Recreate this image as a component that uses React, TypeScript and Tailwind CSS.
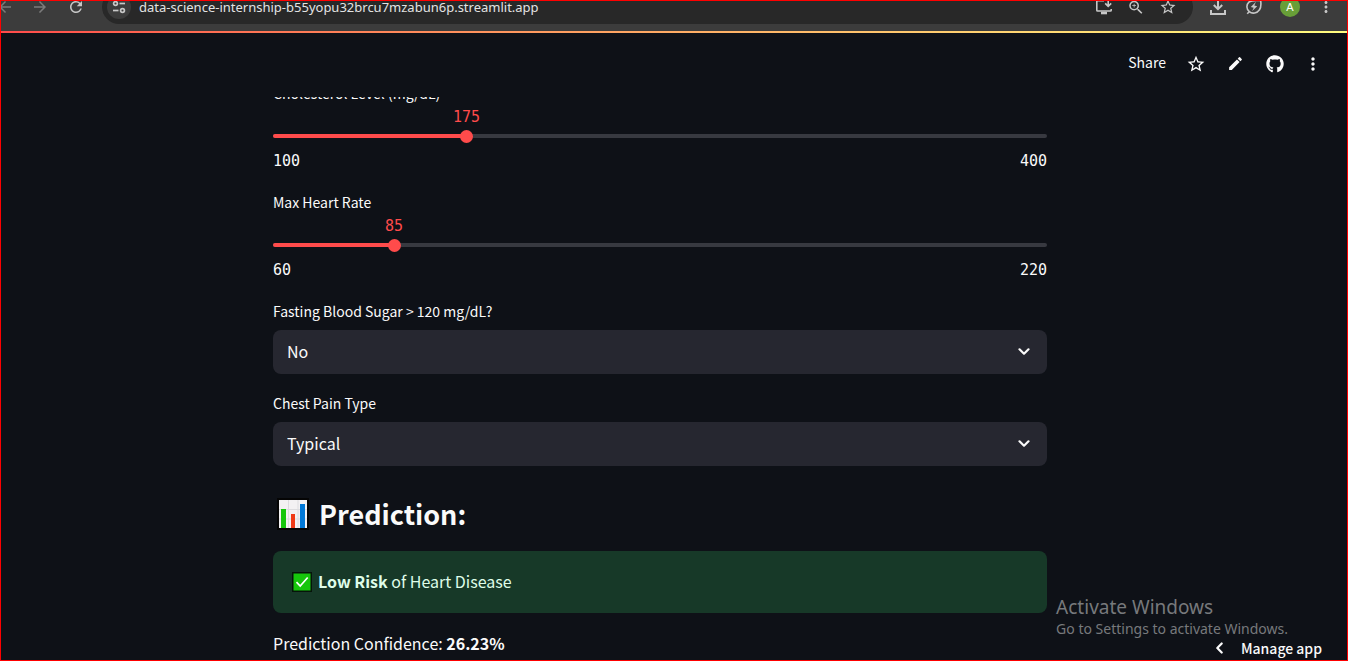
import { useState } from "react";
import type { ReactNode } from "react";
import { FaGithub } from "react-icons/fa";
import { MdArrowBack, MdArrowForward, MdEdit, MdMoreVert, MdRefresh, MdStarBorder, MdZoomIn } from "react-icons/md";

function IconButton({ label, className, children }: { label: string; className: string; children: ReactNode }) {
  return (
    <button type="button" aria-label={label} className={`flex shrink-0 items-center justify-center ${className}`}>
      {children}
    </button>
  );
}

function SiteSettingsIcon() {
  return (
    <svg width="16" height="16" viewBox="0 0 16 16" fill="none" stroke="currentColor" strokeWidth="1.7">
      <circle cx="4.5" cy="4.5" r="1.9" />
      <path d="M8.5 4.5H14" />
      <circle cx="11.5" cy="11.5" r="1.9" />
      <path d="M2 11.5h5.5" />
    </svg>
  );
}

function InstallIcon() {
  return (
    <svg width="18" height="18" viewBox="0 0 18 18" fill="none" stroke="currentColor" strokeWidth="1.6">
      <path d="M9 2.8H2.6a.8.8 0 0 0-.8.8v8.6c0 .4.4.8.8.8h12.8c.4 0 .8-.4.8-.8V11" />
      <path d="M6 15h6" strokeWidth="2.6" />
      <path d="M13.2 1v7M10.2 5.4l3 3 3-3" />
    </svg>
  );
}

function DownloadIcon() {
  return (
    <svg width="18" height="18" viewBox="0 0 18 18" fill="none" stroke="currentColor" strokeWidth="2">
      <path d="M9 1v10M4.8 7l4.2 4.2L13.2 7M2 12v4h14v-4" />
    </svg>
  );
}

function EnergyIcon() {
  return (
    <svg width="18" height="18" viewBox="0 0 18 18" fill="none" stroke="currentColor" strokeWidth="1.6">
      <path d="M15.6 2.2c.5 3.3.7 7-1.1 9.6-2.4 3.5-7.2 4.4-10.2 1.9-3-2.5-3.2-7-.4-9.6C7 1.5 11 2.700 15.600 2.200Z" />
      <path d="M4.3 13.7 2.2 15.8" />
      <path d="M11 3.8 5.8 9l2.9.7-1.7 3.6 5.2-5.1-2.9-.8L11 3.800Z" fill="currentColor" stroke="none" />
    </svg>
  );
}

function BarChartIcon() {
  return (
    <svg width="32" height="32" viewBox="0 0 32 32" aria-hidden="true" className="shrink-0">
      <rect width="32" height="32" fill="#050505" />
      <rect x="2" y="2" width="28" height="28" fill="#f3f1f3" />
      <path d="M2 11.5h28M2 21h28M11.5 2v28M21 2v28" stroke="#dddcdf" />
      <rect x="4" y="11" width="5" height="19" fill="#16c60c" />
      <rect x="14" y="16" width="4" height="14" fill="#f03a17" />
      <rect x="23" y="6" width="5" height="24" fill="#0078d7" />
    </svg>
  );
}

function CheckIcon() {
  return (
    <svg width="20" height="20" viewBox="0 0 20 20" aria-hidden="true" className="shrink-0">
      <rect width="20" height="20" fill="#06150a" />
      <rect x="1.5" y="1.5" width="17" height="17" fill="#16c60c" />
      <path d="m4.5 10.2 3.7 3.8 7.500-8.500" fill="none" stroke="#fff" strokeWidth="1.7" />
    </svg>
  );
}

function Chevron({ className }: { className: string }) {
  return (
    <svg width="12" height="12" viewBox="0 0 12 12" fill="none" stroke="currentColor" strokeWidth="2.2" strokeLinecap="round" strokeLinejoin="round" aria-hidden="true" className={className}>
      <path d="m1.5 3.3 4.5 4.4 4.5-4.4" />
    </svg>
  );
}

function BrowserBar() {
  return (
    <div className="h-[30px] shrink-0 overflow-hidden bg-[#3c3c3c] text-[#c7c7c7]">
      <div className="-mt-[11px] flex h-[34px] items-center">
        <IconButton label="Back" className="-ml-1 w-4 text-[#7b7b7b]"><MdArrowBack size={18} className="shrink-0" /></IconButton>
        <IconButton label="Forward" className="ml-[18px] w-[18px] text-[#7b7b7b]"><MdArrowForward size={18} /></IconButton>
        <IconButton label="Reload" className="ml-[18px] w-[18px]"><MdRefresh size={18} /></IconButton>
        <div className="ml-[17px] flex h-[34px] min-w-0 flex-1 items-center rounded-full bg-[#282828] pr-4 pl-[5px]">
          <IconButton label="Site information" className="h-6 w-6 rounded-full bg-[#3c3c3c]"><SiteSettingsIcon /></IconButton>
          <input
            aria-label="Address"
            defaultValue="data-science-internship-b55yopu32brcu7mzabun6p.streamlit.app"
            className="ml-2 min-w-0 flex-1 bg-transparent pt-[2px] font-['Noto_Sans',sans-serif] text-[13px] text-[#e3e3e3] outline-none"
          />
          <IconButton label="Install app" className="w-[18px]"><InstallIcon /></IconButton>
          <IconButton label="Zoom" className="ml-[14px] w-[18px]"><MdZoomIn size={19} /></IconButton>
          <IconButton label="Bookmark" className="ml-[14px] w-[18px]"><MdStarBorder size={20} /></IconButton>
        </div>
        <IconButton label="Downloads" className="ml-4 w-[18px]"><DownloadIcon /></IconButton>
        <IconButton label="Energy saver" className="ml-[18px] w-[18px]"><EnergyIcon /></IconButton>
        <IconButton label="Profile" className="ml-[17px] h-5 w-5 rounded-full bg-[#689f38] font-['Liberation_Sans',sans-serif] text-[11px] text-white">A</IconButton>
        <IconButton label="Menu" className="mr-3 ml-[17px] w-[18px]"><MdMoreVert size={20} /></IconButton>
      </div>
    </div>
  );
}

function AppHeader() {
  return (
    <header className="flex h-16 shrink-0 items-center justify-end pr-6 pb-[3px] text-[#fafafa]">
      <button type="button" className="pb-[2px] text-[14px]">Share</button>
      <IconButton label="Favorite" className="ml-5 w-5"><MdStarBorder size={20} /></IconButton>
      <IconButton label="Edit" className="ml-5 w-[18px]"><MdEdit size={17} /></IconButton>
      <IconButton label="View on GitHub" className="ml-[22px] w-[18px]"><FaGithub size={18} /></IconButton>
      <IconButton label="More options" className="ml-[19px] w-5"><MdMoreVert size={22} /></IconButton>
    </header>
  );
}

function SliderField({ id, label, min, max, initial }: { id: string; label: string; min: number; max: number; initial: number }) {
  const [value, setValue] = useState(initial);
  const percent = ((value - min) / (max - min)) * 100;
  return (
    <div className="flex flex-col">
      <label htmlFor={id} className="pb-[2px] text-[14px] leading-[22px]">{label}</label>
      <div style={{ paddingLeft: `${percent}%` }} className="font-['DejaVu_Sans_Mono',monospace] text-[15px] leading-[22px] text-[#ff4b4b]">
        <output htmlFor={id} className="flex w-0 justify-center">{value}</output>
      </div>
      <div className="grid h-4 items-center">
        <div className="col-start-1 row-start-1 h-1 overflow-hidden rounded-full bg-[#373940]">
          <div style={{ width: `${percent}%` }} className="h-full bg-[#ff4b4b]" />
        </div>
        <input
          id={id}
          type="range"
          min={min}
          max={max}
          value={value}
          onChange={(event) => setValue(Number(event.target.value))}
          className="col-start-1 row-start-1 -mx-[6px] h-4 appearance-none bg-transparent [&::-webkit-slider-thumb]:h-[13px] [&::-webkit-slider-thumb]:w-[13px] [&::-webkit-slider-thumb]:appearance-none [&::-webkit-slider-thumb]:rounded-full [&::-webkit-slider-thumb]:bg-[#ff4b4b]"
        />
      </div>
      <div className="flex justify-between pt-[6px] pb-[1px] font-['DejaVu_Sans_Mono',monospace] text-[15px] leading-[22px]">
        <span>{min}</span>
        <span>{max}</span>
      </div>
    </div>
  );
}

function SelectField({ id, label, options }: { id: string; label: string; options: string[] }) {
  return (
    <div className="flex flex-col gap-2">
      <label htmlFor={id} className="text-[14px] leading-[22px]">{label}</label>
      <div className="grid items-center">
        <select id={id} className="col-start-1 row-start-1 h-11 w-full appearance-none rounded-lg bg-[#262730] px-[14px] pb-[2px] text-[16px] outline-none">
          {options.map((option) => (
            <option key={option}>{option}</option>
          ))}
        </select>
        <Chevron className="pointer-events-none col-start-1 row-start-1 mr-[17px] justify-self-end" />
      </div>
    </div>
  );
}

export default function App() {
  return (
    <div className="relative flex h-screen flex-col overflow-hidden border border-[#ff0000] bg-[#0e1117] font-['Noto_Sans_CJK_SC',sans-serif] text-[#fafafa]">
      <BrowserBar />
      <div className="h-[2px] shrink-0 bg-linear-to-r from-[#ff4b4b] to-[#fffd80]" />
      <AppHeader />
      <main className="min-h-0 flex-1 overflow-hidden pr-7">
        <div className="mx-auto -mt-[15px] flex max-w-[774px] flex-col">
          <form className="flex flex-col gap-[18px]">
            <SliderField id="cholesterol" label="Cholesterol Level (mg/dL)" min={100} max={400} initial={175} />
            <SliderField id="heart-rate" label="Max Heart Rate" min={60} max={220} initial={85} />
            <SelectField id="blood-sugar" label="Fasting Blood Sugar > 120 mg/dL?" options={["No", "Yes"]} />
            <SelectField id="chest-pain" label="Chest Pain Type" options={["Typical", "Atypical", "Non-anginal", "Asymptomatic"]} />
          </form>
          <h2 className="mt-7 flex items-center gap-[10px] pl-1 text-[27px] leading-10 font-bold">
            <BarChartIcon />
            Prediction:
          </h2>
          <div role="status" className="mt-[17px] flex h-[62px] items-center gap-[6px] rounded-lg bg-[#173928] px-[19px] text-[16px] text-[#dffde9]">
            <CheckIcon />
            <p className="pb-[2px]"><strong>Low Risk</strong> of Heart Disease</p>
          </div>
          <p className="mt-[18px] text-[16px] leading-6">Prediction Confidence: <strong>26.23%</strong></p>
        </div>
      </main>
      <aside className="pointer-events-none absolute right-[59px] bottom-[21px] font-['Noto_Sans',sans-serif] text-[#77797c]">
        <p className="text-[19px] leading-6">Activate Windows</p>
        <p className="text-[14px] leading-5">Go to Settings to activate Windows.</p>
      </aside>
      <button type="button" className="absolute right-[25px] bottom-0 flex h-6 items-center gap-4 text-[14px] font-medium">
        <Chevron className="rotate-90" />
        Manage app
      </button>
    </div>
  );
}
